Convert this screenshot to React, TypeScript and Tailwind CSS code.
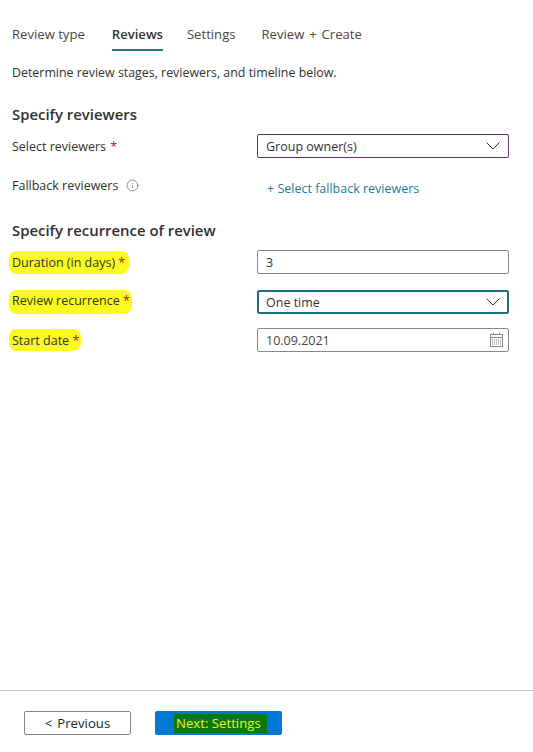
import { Info } from "lucide-react";

const font = "font-['Open_Sans','Noto_Sans',sans-serif]";

function Tab({ label, active, className }: { label: string; active?: boolean; className?: string }) {
  return (
    <div className={(active ? "relative font-semibold text-[#323130] " : "text-[#484644] ") + (className ?? "")}>
      {label}
      {active && <div className="absolute left-0 right-0 top-[25px] h-[2px] bg-[#2b7489]" />}
    </div>
  );
}

function Row({ label, children, className }: { label: React.ReactNode; children: React.ReactNode; className?: string }) {
  return (
    <div className={"flex h-[24px] items-center justify-between " + (className ?? "")}>
      <div className="flex items-center">{label}</div>
      <div className="w-[252px]">{children}</div>
    </div>
  );
}

function Marked({ children, className }: { children: React.ReactNode; className?: string }) {
  return <span className={"-ml-[3px] rounded-[8px] bg-[#fbfb1e] pl-[3px] leading-[17px] text-[#323130] " + (className ?? "")}>{children}</span>;
}

function Chevron() {
  return (
    <svg width="14" height="8" viewBox="0 0 14 8" fill="none" stroke="#323130" strokeWidth="1">
      <path d="M0.5 0.5 L7 7 L13.5 0.5" />
    </svg>
  );
}

function CalendarIcon() {
  return (
    <svg width="13" height="14" viewBox="0 0 13 14" fill="none" stroke="#8a8886" strokeWidth="1">
      <rect x="0.5" y="1.5" width="12" height="12" />
      <path d="M0.5 4.5 H12.5" />
      <path d="M3.5 0 V2 M9.5 0 V2" />
      <path d="M2 7 H11 M2 9 H11 M2 11 H11" strokeDasharray="1 1" />
    </svg>
  );
}

export default function App() {
  return (
    <div className={font + " flex h-[752px] w-[533px] flex-col bg-white text-[12.5px] text-[#323130]"}>
      <div className="flex-1 pl-[12px] pr-[24px]">
        <div className="mt-[24px] flex h-[20px] text-[13.1px] leading-[20px]">
          <Tab label="Review type" />
          <Tab label="Reviews" active className="ml-[27px]" />
          <Tab label="Settings" className="ml-[24px]" />
          <Tab label="Review + Create" className="ml-[26px] [word-spacing:1.5px]" />
        </div>

        <p className="mt-[19px] text-[12.4px] leading-[20px]">Determine review stages, reviewers, and timeline below.</p>

        <h2 className="mt-[21px] text-[14.9px] font-semibold leading-[20px]">Specify reviewers</h2>
        <Row
          className="mt-[10px]"
          label={
            <span className="pt-[2px]">
              Select reviewers <span className="ml-[1px] text-[#a4262c]">*</span>
            </span>
          }
        >
          <div className="flex h-[24px] items-center justify-between rounded-[2px] border border-[#6b2c75] pl-[8px] pr-[8px]">
            <span className="pt-[2px]">Group owner(s)</span>
            <Chevron />
          </div>
        </Row>
        <Row
          className="mt-[15px]"
          label={
            <>
              <span className="pt-[2px]">Fallback reviewers</span>
              <Info size={13} strokeWidth={1.2} className="ml-[8px] text-[#605e5c]" />
            </>
          }
        >
          <div className="flex h-[24px] items-center pl-[10px] pt-[8px] text-[#1b7a9e]">+ Select fallback reviewers</div>
        </Row>

        <h2 className="mt-[23px] text-[14.9px] font-semibold leading-[20px]">Specify recurrence of review</h2>
        <Row
          className="mt-[10px]"
          label={
            <Marked className="pb-[3px] pr-[4px] pt-[3px]">
              Duration (in days) <span className="text-[#a4262c]">*</span>
            </Marked>
          }
        >
          <div className="flex h-[24px] items-center rounded-[2px] border border-[#8a8886] pl-[8px] pt-[2px]">3</div>
        </Row>
        <Row
          className="mt-[16px]"
          label={
            <Marked className="pb-[5px] pr-[2px] pt-[2px]">
              Review recurrence <span className="text-[#a4262c]">*</span>
            </Marked>
          }
        >
          <div className="flex h-[24px] items-center justify-between rounded-[2px] border-2 border-[#1f6f8b] pl-[7px] pr-[7px]">
            <span className="pt-[2px]">One time</span>
            <Chevron />
          </div>
        </Row>
        <Row
          className="mt-[14px]"
          label={
            <Marked className="pb-[2px] pr-[2px] pt-[3px]">
              Start date <span className="text-[#a4262c]">*</span>
            </Marked>
          }
        >
          <div className="flex h-[24px] items-center justify-between rounded-[2px] border border-[#8a8886] pl-[8px] pr-[5px]">
            <span className="pt-[2px] text-[#484644]">10.09.2021</span>
            <CalendarIcon />
          </div>
        </Row>
      </div>

      <div className="flex h-[62px] gap-[24px] border-t border-[#c4c4c4] pl-[24px] pt-[20px] text-[13.2px]">
        <button className="flex h-[24px] w-[107px] items-center justify-center rounded-[2px] border border-[#8a8886] pt-[1px] text-[#201f1e]">
          <span className="mr-[5px]">{"<"}</span>Previous
        </button>
        <button className="flex h-[24px] w-[127px] items-center rounded-[2px] bg-[#0078d4] pl-[19px] pt-[1px]">
          <span className="bg-[#0b7a0b] pl-[2px] pr-[6px] text-[#e6f53c]">Next: Settings</span>
        </button>
      </div>
    </div>
  );
}
